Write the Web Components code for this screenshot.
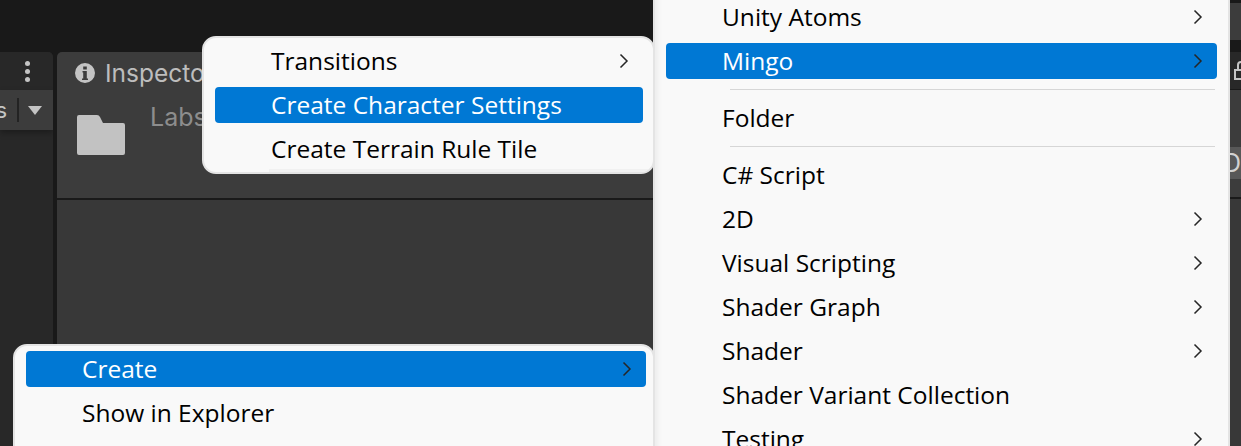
<!DOCTYPE html>
<html>
<head>
<meta charset="utf-8">
<title>Create menu</title>
<style>
	html, body {
		margin: 0;
		height: 100%;
		overflow: hidden;
		background: #191919;
	}
</style>
</head>
<body>
<unity-editor>
	<context-menu style="left:202px; top:36px; width:453px; height:138px; z-index:3" pad="1px 10px 0 11px">
		<menu-row arrow>Transitions</menu-row>
		<menu-row active>Create Character Settings</menu-row>
		<menu-row>Create Terrain Rule Tile</menu-row>
		<menu-foot></menu-foot>
	</context-menu>
	<context-menu style="left:13px; top:344px; width:642px; height:120px; z-index:1" pad="1px 7px 0 11px">
		<menu-row arrow active>Create</menu-row>
		<menu-row>Show in Explorer</menu-row>
	</context-menu>
	<context-menu style="left:653px; top:-7px; width:577px; height:480px; z-index:2; border-radius:0; box-shadow: inset 6px 0 5px -3px rgba(0,0,0,.05)" pad="0 11px 0 11px">
		<menu-row arrow>Unity Atoms</menu-row>
		<menu-row arrow active>Mingo</menu-row>
		<menu-sep></menu-sep>
		<menu-row>Folder</menu-row>
		<menu-sep></menu-sep>
		<menu-row>C# Script</menu-row>
		<menu-row arrow>2D</menu-row>
		<menu-row arrow>Visual Scripting</menu-row>
		<menu-row arrow>Shader Graph</menu-row>
		<menu-row arrow>Shader</menu-row>
		<menu-row>Shader Variant Collection</menu-row>
		<menu-row arrow>Testing</menu-row>
	</context-menu>
</unity-editor>
<script>
class UnityEditor extends HTMLElement {
	constructor() {
		super();
		this.attachShadow({ mode: 'open' });
		this.shadowRoot.innerHTML = `
<style>
	:host {
		display: grid;
		grid-template-columns: 53px 1fr 11px;
		column-gap: 4px;
		position: relative;
		height: 446px;
		padding-top: 52px;
		box-sizing: border-box;
		overflow: hidden;
		background: #191919;
		font-family: Inter, "Noto Sans", sans-serif;
	}
	.panel {
		display: flex;
		flex-direction: column;
		min-width: 0;
		border-radius: 5px 5px 0 0;
		overflow: hidden;
	}
	.left { background: #282828; border-radius: 0 5px 0 0; }
	.left .tab {
		height: 38px;
		display: flex;
		justify-content: flex-end;
		align-items: center;
		padding-right: 23px;
		background: #282828;
	}
	.left .tools {
		height: 40px;
		display: flex;
		align-items: center;
		justify-content: flex-end;
		background: #3c3c3c;
		color: #c4c4c4;
		font-size: 22px;
		box-shadow: 0 3px 6px rgba(0,0,0,.3);
	}
	.left .tools > * { flex-shrink: 0; }
	.left .tools span { margin-right: 10px; }
	.left .bar { width: 2px; height: 24px; background: #232323; margin-right: 9px; }
	.left .drop {
		width: 0;
		height: 0;
		border: 7px solid transparent;
		border-top: 9px solid #c4c4c4;
		border-bottom: 0;
		margin-right: 11px;
	}
	.dots { display: flex; flex-direction: column; gap: 3px; }
	.dots i { width: 5px; height: 5px; border-radius: 50%; background: #c4c4c4; }
	.inspector { background: #3c3c3c; }
	.inspector .head { height: 146px; border-bottom: 2px solid #1a1a1a; }
	.inspector .title {
		display: flex;
		align-items: center;
		gap: 10px;
		padding: 6px 0 0 18px;
		color: #bdbdbd;
		font-size: 24.5px;
	}
	.inspector .asset {
		display: flex;
		gap: 25px;
		padding: 14px 0 0 20px;
		color: #8d8d8d;
		font-size: 25px;
	}
	.inspector .asset svg { margin-top: 13px; }
	.inspector .body { flex: 1; background: #383838; }
	.right { background: #191919; border-radius: 0; margin-top: -52px; }
	.right .a { height: 3px; }
	.right .b { height: 37px; background: #3c3c3c; }
	.right .c { height: 12px; }
	.right .d { height: 37px; background: #282828; position: relative; }
	.right .d svg { position: absolute; left: 4px; top: 8px; }
	.right .e { height: 57px; background: #3c3c3c; margin-top: 1px; }
	.right .f { height: 32px; background: #585858; color: #d2d2d2; font-size: 25px; line-height: 32px; white-space: nowrap; text-indent: -7px; }
	.right .g { height: 18px; background: #3c3c3c; }
	.right .h { height: 2px; background: #1a1a1a; }
	.right .i { flex: 1; background: #383838; }
</style>
<div class="panel left">
	<div class="tab"><div class="dots"><i></i><i></i><i></i></div></div>
	<div class="tools"><span>s</span><div class="bar"></div><div class="drop"></div></div>
</div>
<div class="panel inspector">
	<div class="head">
		<div class="title">
			<svg width="20" height="20" viewBox="0 0 20 20"><path fill="#c4c4c4" fill-rule="evenodd" d="M10 0a10 10 0 1 0 0 20a10 10 0 0 0 0-20zM8.2 3.5h3.6v3H8.2zM7.5 8h4.3v7.5h1.2v1.5H7v-1.5h1.2V9.5H7.5z"/></svg>
			<span>Inspector</span>
		</div>
		<div class="asset">
			<svg width="48" height="40" viewBox="0 0 48 40"><path fill="#c2c2c2" d="M2 0h18q2 0 3 2l3 6h20q2 0 2 2v28q0 2-2 2H2q-2 0-2-2V2q0-2 2-2z"/></svg>
			<span>Labs</span>
		</div>
	</div>
	<div class="body"></div>
</div>
<div class="panel right">
	<div class="a"></div><div class="b"></div><div class="c"></div>
	<div class="d"><svg width="10" height="20" viewBox="0 0 10 20"><path fill="none" stroke="#c4c4c4" stroke-width="2" d="M1 10h9v9H1z M4 10V5q0-3 3-3h4"/></svg></div>
	<div class="e"></div><div class="f">D</div><div class="g"></div><div class="h"></div><div class="i"></div>
</div>
<slot></slot>`;
	}
}
customElements.define('unity-editor', UnityEditor);

class ContextMenu extends HTMLElement {
	constructor() {
		super();
		this.attachShadow({ mode: 'open' });
		this.shadowRoot.innerHTML = `
<style>
	:host {
		display: block;
		position: absolute;
		box-sizing: border-box;
		background: #f9f9f9;
		border: 2px solid #e4e4e4;
		border-radius: 14px;
		overflow: hidden;
		font-family: "Open Sans", "Noto Sans", sans-serif;
		font-size: 24.5px;
		color: #000;
	}
	.list { display: flex; flex-direction: column; }
</style>
<div class="list"><slot></slot></div>`;
	}
	connectedCallback() {
		this.shadowRoot.querySelector('.list').style.padding = this.getAttribute('pad');
	}
}
customElements.define('context-menu', ContextMenu);

class MenuRow extends HTMLElement {
	constructor() {
		super();
		this.attachShadow({ mode: 'open' });
		this.shadowRoot.innerHTML = `
<style>
	:host {
		display: block;
		height: 44px;
		padding: 4px 0;
		box-sizing: border-box;
	}
	.row {
		height: 36px;
		display: flex;
		align-items: center;
		justify-content: space-between;
		padding: 0 14px 0 56px;
		border-radius: 4px;
		white-space: nowrap;
	}
	.row span { padding-bottom: 2px; }
	:host([active]) .row {
		background: #0078d4;
		color: #fff;
	}
	svg { display: none; }
	:host([arrow]) svg { display: block; }
</style>
<div class="row"><span><slot></slot></span>
<svg width="10" height="16" viewBox="0 0 10 16"><path fill="none" stroke="#262626" stroke-width="1.5" d="M1.5 1.5L8 8L1.5 14.5"/></svg></div>`;
	}
}
customElements.define('menu-row', MenuRow);

class MenuSep extends HTMLElement {
	constructor() {
		super();
		this.attachShadow({ mode: 'open' });
		this.shadowRoot.innerHTML = `
<style>
	:host {
		display: block;
		height: 1px;
		margin: 6px 2px 6px 64px;
		background: #d6d6d6;
	}
</style>`;
	}
}
customElements.define('menu-sep', MenuSep);

// faint strip along the bottom of the small menu
class MenuFoot extends HTMLElement {
	constructor() {
		super();
		this.attachShadow({ mode: 'open' });
		this.shadowRoot.innerHTML = `
<style>
	:host {
		display: block;
		position: absolute;
		left: 65px;
		right: 0;
		bottom: 0;
		height: 3px;
		background: #f1f1f1;
	}
</style>`;
	}
}
customElements.define('menu-foot', MenuFoot);
</script>
</body>
</html>
